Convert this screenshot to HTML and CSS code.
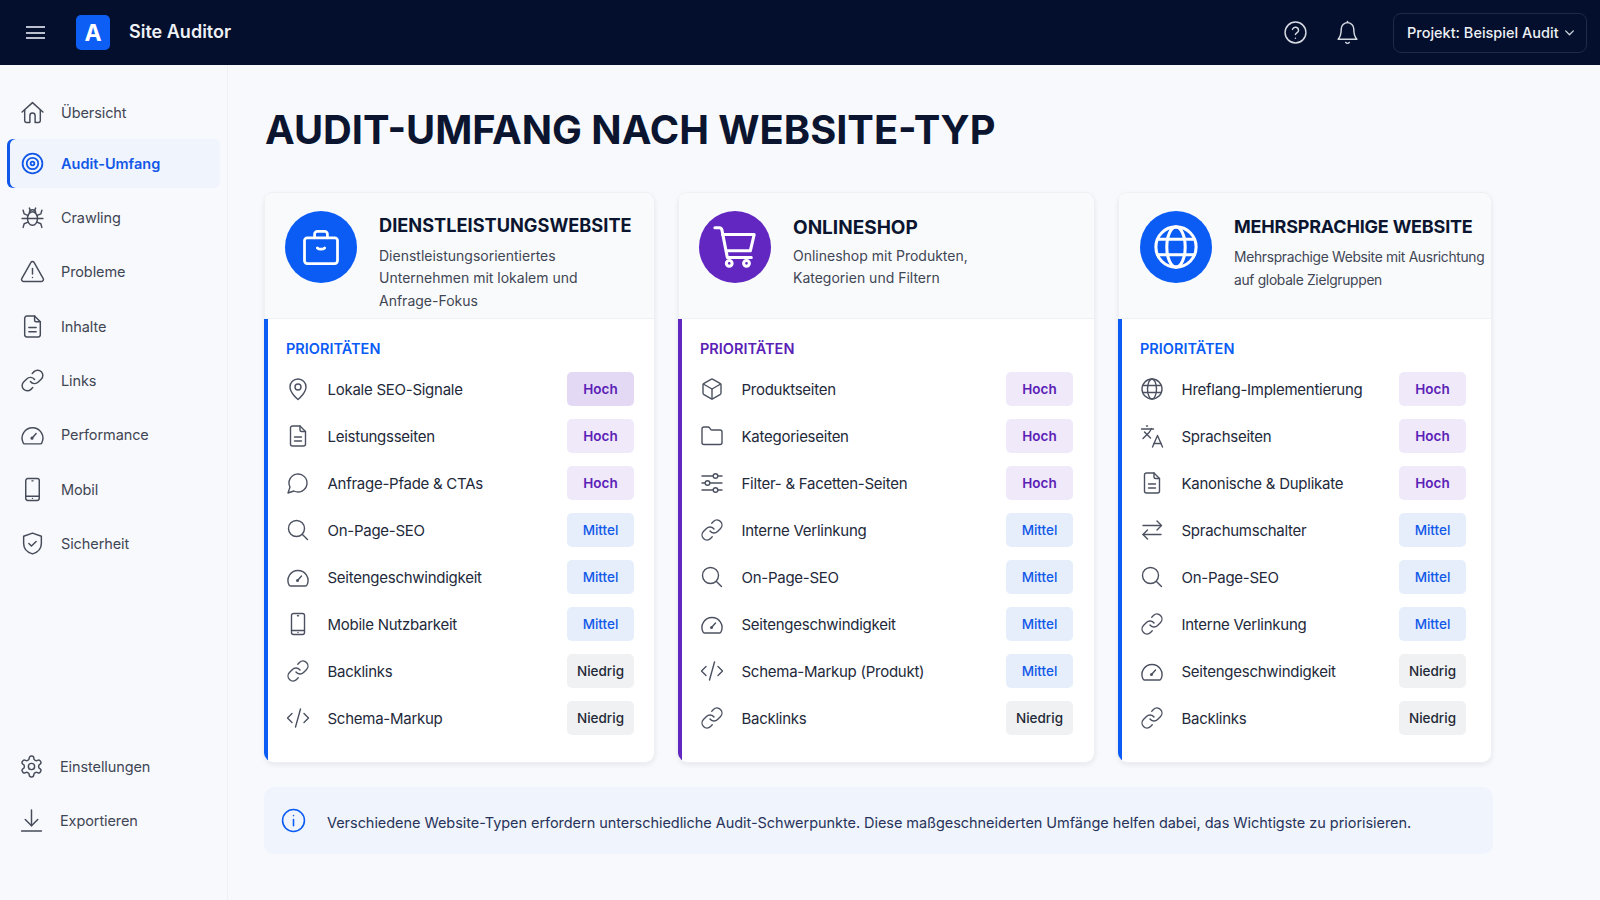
FILE: index.html
```html
<!DOCTYPE html>
<html lang="de">
<head>
  <meta charset="UTF-8" />
  <title>Site Auditor</title>
  <link rel="stylesheet" href="styles.css">
</head>
<body>

<!-- icon sprite -->
<svg class="sprite" xmlns="http://www.w3.org/2000/svg">
  <symbol id="i-home" viewBox="0 0 24 24"><path d="M2 11.500 12 2.500l10 9"/><path d="M4.500 9.500V20a1.500 1.500 0 0 0 1.500 1.500h3.500V15a2.500 2.500 0 0 1 5 0v6.500H18a1.500 1.500 0 0 0 1.500-1.500V9.500"/></symbol>
  <symbol id="i-target" viewBox="0 0 24 24"><circle cx="12" cy="12" r="9.500"/><circle cx="12" cy="12" r="5.500"/><circle cx="12" cy="12" r="1.800"/></symbol>
  <symbol id="i-bug" viewBox="0 0 24 24"><ellipse cx="12" cy="13" rx="4.800" ry="6.500"/><path d="M9 7.500a3 3 0 0 1 6 0"/><path d="M7.500 13h9"/><path d="M9 3 10 5.500M15 3l-1 2.500"/><path d="M7.500 10 4 8.500 3 5M16.500 10 20 8.500 21 5"/><path d="M7 13H2M17 13h5"/><path d="M7.800 16.500 4 18l-1 3.500M16.200 16.500 20 18l1 3.500"/></symbol>
  <symbol id="i-alert" viewBox="0 0 24 24"><path d="M10.500 3.300 1.700 18.800A1.800 1.800 0 0 0 3.300 21.500h17.400a1.800 1.800 0 0 0 1.600-2.700L13.500 3.300a1.700 1.700 0 0 0-3 0z"/><path d="M12 9v5.500"/><path d="M12 17.800h.01"/></symbol>
  <symbol id="i-doc" viewBox="0 0 24 24"><path d="M14 2H6.500A2 2 0 0 0 4.500 4v16a2 2 0 0 0 2 2h11a2 2 0 0 0 2-2V7.500z"/><path d="M14 2v4a1.500 1.500 0 0 0 1.500 1.500h4"/><path d="M8.500 13h7"/><path d="M8.500 17h7"/></symbol>
  <symbol id="i-link" viewBox="0 0 24 24"><path d="M10 13a5 5 0 0 0 7.540.54l3-3a5 5 0 0 0-7.070-7.070l-1.720 1.710"/><path d="M14 11a5 5 0 0 0-7.540-.54l-3 3a5 5 0 0 0 7.070 7.070l1.710-1.710"/></symbol>
  <symbol id="i-gauge" viewBox="0 0 24 24"><path d="M4.500 21h15a1.600 1.600 0 0 0 1.500-1.100A10 10 0 1 0 3 19.900a1.600 1.600 0 0 0 1.500 1.100z"/><path d="M11.500 15.500 15.500 11"/><circle cx="11.500" cy="15.500" r=".8"/></symbol>
  <symbol id="i-phone" viewBox="0 0 24 24"><rect x="5.500" y="1.500" width="13" height="21" rx="2"/><path d="M5.500 18.500h13"/><path d="M12 20.500h.01"/><path d="M11.500 3.700h1"/></symbol>
  <symbol id="i-shield" viewBox="0 0 24 24"><path d="M12 2 3.500 5v7c0 5 3.500 8.500 8.500 10 5-1.500 8.500-5 8.500-10V5z"/><path d="m8.500 12 2.500 2.500 4.500-4.500"/></symbol>
  <symbol id="i-gear" viewBox="0 0 24 24"><path d="M12.220 2h-.44a2 2 0 0 0-2 2v.18a2 2 0 0 1-1 1.730l-.43.250a2 2 0 0 1-2 0l-.15-.08a2 2 0 0 0-2.730.730l-.22.380a2 2 0 0 0 .73 2.730l.15.1a2 2 0 0 1 1 1.720v.51a2 2 0 0 1-1 1.740l-.15.09a2 2 0 0 0-.73 2.730l.22.380a2 2 0 0 0 2.730.730l.15-.08a2 2 0 0 1 2 0l.43.250a2 2 0 0 1 1 1.730V20a2 2 0 0 0 2 2h.44a2 2 0 0 0 2-2v-.18a2 2 0 0 1 1-1.730l.43-.250a2 2 0 0 1 2 0l.15.08a2 2 0 0 0 2.730-.730l.22-.39a2 2 0 0 0-.73-2.730l-.15-.08a2 2 0 0 1-1-1.740v-.5a2 2 0 0 1 1-1.740l.15-.09a2 2 0 0 0 .73-2.730l-.22-.380a2 2 0 0 0-2.730-.730l-.15.08a2 2 0 0 1-2 0l-.43-.250a2 2 0 0 1-1-1.730V4a2 2 0 0 0-2-2z"/><circle cx="12" cy="12" r="3"/></symbol>
  <symbol id="i-download" viewBox="0 0 24 24"><path d="M12 2v15"/><path d="m6 11 6 6 6-6"/><path d="M2.500 22h19"/></symbol>
  <symbol id="i-pin" viewBox="0 0 24 24"><path d="M20 10c0 6-8 12.500-8 12.500S4 16 4 10a8 8 0 0 1 16 0z"/><circle cx="12" cy="10" r="3"/></symbol>
  <symbol id="i-chat" viewBox="0 0 24 24"><path d="M7.900 20A9 9 0 1 0 4 16.100L2 22z"/></symbol>
  <symbol id="i-search" viewBox="0 0 24 24"><circle cx="10.500" cy="10.500" r="8"/><path d="m21.500 21.500-5.300-5.300"/></symbol>
  <symbol id="i-code" viewBox="0 0 24 24"><path d="m18 16.500 4.500-4.500L18 7.500"/><path d="M6 7.500 1.500 12 6 16.500"/><path d="m14.500 3-5 18"/></symbol>
  <symbol id="i-box" viewBox="0 0 24 24"><path d="M21 8a2 2 0 0 0-1-1.730l-7-4a2 2 0 0 0-2 0l-7 4A2 2 0 0 0 3 8v8a2 2 0 0 0 1 1.730l7 4a2 2 0 0 0 2 0l7-4A2 2 0 0 0 21 16z"/><path d="m3.300 7 8.700 5 8.700-5"/><path d="M12 22V12"/></symbol>
  <symbol id="i-folder" viewBox="0 0 24 24"><path d="M20 20.500a2 2 0 0 0 2-2V8a2 2 0 0 0-2-2h-7.900a2 2 0 0 1-1.690-.9L9.600 3.900A2 2 0 0 0 7.930 3H4a2 2 0 0 0-2 2v13.500a2 2 0 0 0 2 2z"/></symbol>
  <symbol id="i-sliders" viewBox="0 0 24 24"><path d="M2 5h11M18 5h4"/><circle cx="15.500" cy="5" r="2.300"/><path d="M2 12h3M10 12h12"/><circle cx="7.500" cy="12" r="2.300"/><path d="M2 19h11M18 19h4"/><circle cx="15.500" cy="19" r="2.300"/></symbol>
  <symbol id="i-globe" viewBox="0 0 24 24"><circle cx="12" cy="12" r="10"/><ellipse cx="12" cy="12" rx="4.500" ry="10"/><path d="M2.800 8.500h18.400"/><path d="M2.800 15.500h18.400"/></symbol>
  <symbol id="i-translate" viewBox="0 0 24 24"><path d="m4.500 8 6 6"/><path d="m3 14.500 6.500-6.500 2-3.500"/><path d="M1.500 5h12"/><path d="M6.500 2h1"/><path d="m22.500 23-5-11.500-5 11.500"/><path d="M14 19.500h7"/></symbol>
  <symbol id="i-swap" viewBox="0 0 24 24"><path d="M3 7.500h18"/><path d="m17 3 4.500 4.500L17 12"/><path d="M21 16.500H3"/><path d="M7.500 12 3 16.500 7.500 21"/></symbol>
  <symbol id="i-bell" viewBox="0 0 24 24"><path d="M6 8.500a6 6 0 0 1 12 0c0 6 1 8 3 10H3c2-2 3-4 3-10z"/><path d="M12 2.500V1.500"/><path d="M10.300 21.500a2 2 0 0 0 3.400 0"/></symbol>
  <symbol id="i-help" viewBox="0 0 24 24"><circle cx="12" cy="12" r="10"/><path d="M9.090 9a3 3 0 0 1 5.830 1c0 2-3 2.500-3 4"/><path d="M11.900 17.500h.01"/></symbol>
  <symbol id="i-info" viewBox="0 0 24 24"><circle cx="12" cy="12" r="10.500"/><path d="M12 11v6"/><path d="M12 7.300h.01"/></symbol>
  <symbol id="i-case" viewBox="0 0 24 24"><rect x="3" y="7" width="18" height="14" rx="1.500"/><path d="M8.500 7V5A1.500 1.500 0 0 1 10 3.500h4A1.500 1.500 0 0 1 15.500 5v2"/><path d="M10 12.500c.9.9 3.100.9 4 0"/></symbol>
  <symbol id="i-cart" viewBox="0 0 24 24"><path d="M1.500 2h2.200a1.500 1.500 0 0 1 1.500 1.200L8 17.500h12.500"/><path d="M5.500 5.500h16.500l-2 8.500H7.500"/><circle cx="9" cy="20.500" r="1.500"/><circle cx="18" cy="20.500" r="1.500"/></symbol>
  <symbol id="i-globe-bold" viewBox="0 0 24 24"><circle cx="12" cy="12" r="10.500"/><ellipse cx="12" cy="12" rx="4.800" ry="10.500"/><path d="M2.500 8h19"/><path d="M2.500 16h19"/></symbol>
</svg>

<header class="topbar">
  <div class="menu-btn"><span></span><span></span><span></span></div>
  <div class="logo">A</div>
  <div class="brand">Site Auditor</div>
  <div class="top-right">
    <svg class="top-icon help-icon"><use href="#i-help"/></svg>
    <svg class="top-icon bell-icon"><use href="#i-bell"/></svg>
    <div class="project">Projekt: Beispiel Audit
      <svg class="chevron" viewBox="0 0 12 12"><path d="m2.500 4.500 3.500 3.500 3.500-3.500"/></svg>
    </div>
  </div>
</header>

<div class="layout">
  <!-- Seitenleiste -->
  <aside class="sidebar">
    <nav class="nav">
      <a class="nav-item first"><svg class="nav-icon"><use href="#i-home"/></svg>Übersicht</a>
      <a class="nav-item active"><svg class="nav-icon"><use href="#i-target"/></svg>Audit-Umfang</a>
      <a class="nav-item"><svg class="nav-icon"><use href="#i-bug"/></svg>Crawling</a>
      <a class="nav-item"><svg class="nav-icon"><use href="#i-alert"/></svg>Probleme</a>
      <a class="nav-item"><svg class="nav-icon"><use href="#i-doc"/></svg>Inhalte</a>
      <a class="nav-item"><svg class="nav-icon"><use href="#i-link"/></svg>Links</a>
      <a class="nav-item"><svg class="nav-icon"><use href="#i-gauge"/></svg>Performance</a>
      <a class="nav-item"><svg class="nav-icon"><use href="#i-phone"/></svg>Mobil</a>
      <a class="nav-item"><svg class="nav-icon"><use href="#i-shield"/></svg>Sicherheit</a>
    </nav>
    <nav class="nav nav-bottom">
      <a class="nav-item"><svg class="nav-icon"><use href="#i-gear"/></svg>Einstellungen</a>
      <a class="nav-item"><svg class="nav-icon"><use href="#i-download"/></svg>Exportieren</a>
    </nav>
  </aside>

  <main class="main">
    <h1 class="page-title">AUDIT-UMFANG NACH WEBSITE-TYP</h1>

    <div class="cards">
      <!-- Karte 1 -->
      <section class="card card-blue">
        <div class="card-head">
          <div class="head-icon"><svg><use href="#i-case"/></svg></div>
          <div class="head-text">
            <h2>DIENSTLEISTUNGSWEBSITE</h2>
            <p>Dienstleistungsorientiertes Unternehmen mit lokalem und Anfrage-Fokus</p>
          </div>
        </div>
        <div class="card-body">
          <div class="label">PRIORITÄTEN</div>
          <div class="row"><svg class="row-icon"><use href="#i-pin"/></svg><span class="row-text">Lokale SEO-Signale</span><span class="badge hoch strong">Hoch</span></div>
          <div class="row"><svg class="row-icon"><use href="#i-doc"/></svg><span class="row-text">Leistungsseiten</span><span class="badge hoch">Hoch</span></div>
          <div class="row"><svg class="row-icon"><use href="#i-chat"/></svg><span class="row-text">Anfrage-Pfade &amp; CTAs</span><span class="badge hoch">Hoch</span></div>
          <div class="row"><svg class="row-icon"><use href="#i-search"/></svg><span class="row-text">On-Page-SEO</span><span class="badge mittel">Mittel</span></div>
          <div class="row"><svg class="row-icon"><use href="#i-gauge"/></svg><span class="row-text">Seitengeschwindigkeit</span><span class="badge mittel">Mittel</span></div>
          <div class="row"><svg class="row-icon"><use href="#i-phone"/></svg><span class="row-text">Mobile Nutzbarkeit</span><span class="badge mittel">Mittel</span></div>
          <div class="row"><svg class="row-icon"><use href="#i-link"/></svg><span class="row-text">Backlinks</span><span class="badge niedrig">Niedrig</span></div>
          <div class="row"><svg class="row-icon"><use href="#i-code"/></svg><span class="row-text">Schema-Markup</span><span class="badge niedrig">Niedrig</span></div>
        </div>
      </section>

      <!-- Karte 2 -->
      <section class="card card-purple">
        <div class="card-head">
          <div class="head-icon"><svg><use href="#i-cart"/></svg></div>
          <div class="head-text">
            <h2>ONLINESHOP</h2>
            <p>Onlineshop mit Produkten, Kategorien und Filtern</p>
          </div>
        </div>
        <div class="card-body">
          <div class="label">PRIORITÄTEN</div>
          <div class="row"><svg class="row-icon"><use href="#i-box"/></svg><span class="row-text">Produktseiten</span><span class="badge hoch">Hoch</span></div>
          <div class="row"><svg class="row-icon"><use href="#i-folder"/></svg><span class="row-text">Kategorieseiten</span><span class="badge hoch">Hoch</span></div>
          <div class="row"><svg class="row-icon"><use href="#i-sliders"/></svg><span class="row-text">Filter- &amp; Facetten-Seiten</span><span class="badge hoch">Hoch</span></div>
          <div class="row"><svg class="row-icon"><use href="#i-link"/></svg><span class="row-text">Interne Verlinkung</span><span class="badge mittel">Mittel</span></div>
          <div class="row"><svg class="row-icon"><use href="#i-search"/></svg><span class="row-text">On-Page-SEO</span><span class="badge mittel">Mittel</span></div>
          <div class="row"><svg class="row-icon"><use href="#i-gauge"/></svg><span class="row-text">Seitengeschwindigkeit</span><span class="badge mittel">Mittel</span></div>
          <div class="row"><svg class="row-icon"><use href="#i-code"/></svg><span class="row-text">Schema-Markup (Produkt)</span><span class="badge mittel">Mittel</span></div>
          <div class="row"><svg class="row-icon"><use href="#i-link"/></svg><span class="row-text">Backlinks</span><span class="badge niedrig">Niedrig</span></div>
        </div>
      </section>

      <!-- Karte 3 -->
      <section class="card card-multi">
        <div class="card-head">
          <div class="head-icon"><svg><use href="#i-globe-bold"/></svg></div>
          <div class="head-text">
            <h2>MEHRSPRACHIGE WEBSITE</h2>
            <p>Mehrsprachige Website mit Ausrichtung auf globale Zielgruppen</p>
          </div>
        </div>
        <div class="card-body">
          <div class="label">PRIORITÄTEN</div>
          <div class="row"><svg class="row-icon"><use href="#i-globe"/></svg><span class="row-text">Hreflang-Implementierung</span><span class="badge hoch">Hoch</span></div>
          <div class="row"><svg class="row-icon"><use href="#i-translate"/></svg><span class="row-text">Sprachseiten</span><span class="badge hoch">Hoch</span></div>
          <div class="row"><svg class="row-icon"><use href="#i-doc"/></svg><span class="row-text">Kanonische &amp; Duplikate</span><span class="badge hoch">Hoch</span></div>
          <div class="row"><svg class="row-icon"><use href="#i-swap"/></svg><span class="row-text">Sprachumschalter</span><span class="badge mittel">Mittel</span></div>
          <div class="row"><svg class="row-icon"><use href="#i-search"/></svg><span class="row-text">On-Page-SEO</span><span class="badge mittel">Mittel</span></div>
          <div class="row"><svg class="row-icon"><use href="#i-link"/></svg><span class="row-text">Interne Verlinkung</span><span class="badge mittel">Mittel</span></div>
          <div class="row"><svg class="row-icon"><use href="#i-gauge"/></svg><span class="row-text">Seitengeschwindigkeit</span><span class="badge niedrig">Niedrig</span></div>
          <div class="row"><svg class="row-icon"><use href="#i-link"/></svg><span class="row-text">Backlinks</span><span class="badge niedrig">Niedrig</span></div>
        </div>
      </section>
    </div>

    <div class="notice">
      <svg class="notice-icon"><use href="#i-info"/></svg>
      <span class="notice-text">Verschiedene Website-Typen erfordern unterschiedliche Audit-Schwerpunkte. Diese maßgeschneiderten Umfänge helfen dabei, das Wichtigste zu priorisieren.</span>
    </div>
  </main>
</div>

</body>
</html>
```

FILE: styles.css
```css
* {
  box-sizing: border-box;
}
html, body {
  height: 100%;
}
body {
  margin: 0;
  font-family: Inter, "Noto Sans", sans-serif;
  background: #f8f9fc;
  color: #1f2937;
  overflow: hidden;
}
svg {
  fill: none;
  stroke: currentColor;
  stroke-linecap: round;
  stroke-linejoin: round;
}
.sprite {
  position: absolute;
  width: 0;
  height: 0;
}

/* top bar */
.topbar {
  height: 65px;
  background: #030f2c;
  color: #fff;
  display: flex;
  align-items: center;
  padding: 0 13px 0 26px;
}
.menu-btn {
  width: 19px;
  display: flex;
  flex-direction: column;
  gap: 3.500px;
}
.menu-btn span {
  display: block;
  height: 2px;
  background: #b9bfcc;
}
.logo {
  width: 34px;
  height: 35px;
  margin-left: 31px;
  border-radius: 5px;
  background: #0d5ef5;
  display: flex;
  align-items: center;
  justify-content: center;
  font-size: 23px;
  font-weight: 700;
}
.brand {
  margin-left: 19px;
  padding-bottom: 2px;
  font-size: 18px;
  font-weight: 600;
  color: #eef1f6;
}
.top-right {
  margin-left: auto;
  display: flex;
  align-items: center;
}
.top-icon {
  width: 25px;
  height: 25px;
  color: #d5d9e2;
  stroke-width: 1.400;
}
.bell-icon {
  margin-left: 27px;
}
.project {
  margin-left: 33px;
  width: 194px;
  height: 40px;
  border: 1px solid #1d2b4b;
  border-radius: 8px;
  display: flex;
  align-items: center;
  justify-content: space-between;
  padding: 0 10px 0 13px;
  font-size: 14.500px;
  font-weight: 500;
  color: #eef1f6;
}
.chevron {
  width: 13px;
  height: 13px;
  stroke-width: 1.300;
  color: #c9ced9;
}

/* layout */
.layout {
  display: flex;
  height: 835px;
}
.sidebar {
  width: 228px;
  flex-shrink: 0;
  border-right: 1px solid #eef0f4;
  padding: 23px 7px 55px;
  display: flex;
  flex-direction: column;
}
.nav {
  display: flex;
  flex-direction: column;
  gap: 5.400px;
}
.nav-bottom {
  margin-top: auto;
}
.nav-bottom .nav-item {
  padding-left: 12px;
  gap: 16px;
}
.nav-item {
  height: 49px;
  display: flex;
  align-items: center;
  gap: 16px;
  padding-left: 13px;
  font-size: 14.500px;
  letter-spacing: -0.1px;
  color: #3f4654;
  border-radius: 6px;
}
.nav-item.first {
  margin-bottom: -3px;
}
.nav-item.active {
  margin-bottom: -1px;
  background: #f0f4fd;
  color: #1258e8;
  font-weight: 600;
  letter-spacing: 0;
  box-shadow: inset 3px 0 0 #1258e8;
}
.nav-icon {
  width: 25px;
  height: 25px;
  flex-shrink: 0;
  stroke-width: 1.400;
  color: #454b58;
}
.active .nav-icon {
  color: #1258e8;
  stroke-width: 1.700;
}

/* content */
.main {
  flex: 1;
  padding: 0 0 0 36px;
}
.page-title {
  margin: 0;
  height: 127px;
  display: flex;
  align-items: center;
  padding: 1px 0 0 1px;
  font-size: 39.800px;
  font-weight: 700;
  color: #0b1530;
}
.cards {
  display: grid;
  grid-template-columns: 391px 417px 374px;
  gap: 23px;
}
.card {
  height: 571px;
  background: #fff;
  border-radius: 10px;
  overflow: hidden;
  border: 1px solid #eef0f4;
  border-left: 0;
  box-shadow: 0 2px 5px rgba(20, 30, 60, 0.08);
}
.card-head {
  height: 126px;
  background: #f9fafc;
  border-left: 1px solid #eef0f4;
  border-bottom: 1px solid #eff1f5;
  display: flex;
  padding: 18px 0 0 20px;
  gap: 22px;
}
.card-multi .card-head {
  padding-left: 21px;
}
.head-icon {
  width: 72px;
  height: 72px;
  border-radius: 50%;
  flex-shrink: 0;
  display: flex;
  align-items: center;
  justify-content: center;
  color: #fff;
}
.head-icon svg {
  width: 44px;
  height: 44px;
  stroke-width: 1.500;
}
.card-purple .head-icon svg,
.card-multi .head-icon svg {
  width: 46px;
  height: 46px;
  stroke-width: 1.600;
}
.card-blue .head-icon,
.card-multi .head-icon {
  background: #0b5cf4;
}
.card-purple .head-icon {
  background: #6127c0;
}
.head-text h2 {
  margin: 0;
  font-size: 18.200px;
  line-height: 24px;
  font-weight: 700;
  color: #0b1530;
  padding-top: 2px;
}
.card-purple .head-text h2 {
  font-size: 19px;
  padding-top: 5px;
}
.card-purple .head-text p {
  margin-top: 5px;
}
.card-multi .head-text h2 {
  font-size: 18px;
  letter-spacing: -0.2px;
  padding-top: 4px;
}
.head-text p {
  margin: 8px 0 0;
  max-width: 215px;
  font-size: 14px;
  line-height: 22.300px;
  color: #3f4654;
}
.card-multi .head-text p {
  max-width: 256px;
  font-size: 13.800px;
  letter-spacing: -0.3px;
  line-height: 23px;
  margin-top: 7px;
}
.card-body {
  border-left: 4px solid #0b5cf4;
  padding: 19px 20px 0 17px;
  height: 444px;
}
.card-purple .card-body {
  padding-right: 21px;
  border-left-color: #6127c0;
}
.card-multi .card-body {
  padding-right: 25px;
}
.label {
  margin-left: 1px;
  font-size: 14.500px;
  line-height: 22px;
  font-weight: 600;
  color: #0b5cf4;
  margin-bottom: 5px;
}
.card-purple .label {
  color: #5b21b6;
}
.row {
  height: 47px;
  display: flex;
  align-items: center;
}
.row-icon {
  width: 24px;
  height: 24px;
  margin-left: .5px;
  flex-shrink: 0;
  stroke-width: 1.400;
  color: #4b5160;
}
.row-text {
  margin-left: 18px;
  padding-top: 2px;
  font-size: 15px;
  letter-spacing: -0.26px;
  color: #23293a;
}
.badge {
  margin-left: auto;
  width: 67px;
  height: 34px;
  border-radius: 5px;
  display: flex;
  align-items: center;
  justify-content: center;
  font-size: 13.500px;
  font-weight: 600;
}
.hoch {
  background: #efe9fa;
  color: #5b21b6;
}
.hoch.strong {
  background: #e3d9f5;
}
.mittel {
  background: #e6eefb;
  color: #1258e8;
  font-weight: 500;
}
.niedrig {
  background: #f0f1f3;
  color: #1f2937;
  font-weight: 500;
}

/* hinweis */
.notice {
  margin-top: 24px;
  width: 1229px;
  height: 67px;
  background: #f0f4fc;
  border-radius: 10px;
  display: flex;
  align-items: center;
  gap: 21px;
  padding-left: 17px;
  font-size: 14.500px;
  letter-spacing: -0.05px;
  color: #27335a;
}
.notice-icon {
  width: 25px;
  height: 25px;
  flex-shrink: 0;
  stroke-width: 1.500;
  color: #0b5cf4;
}
.notice-text {
  padding-top: 4px;
}
```
